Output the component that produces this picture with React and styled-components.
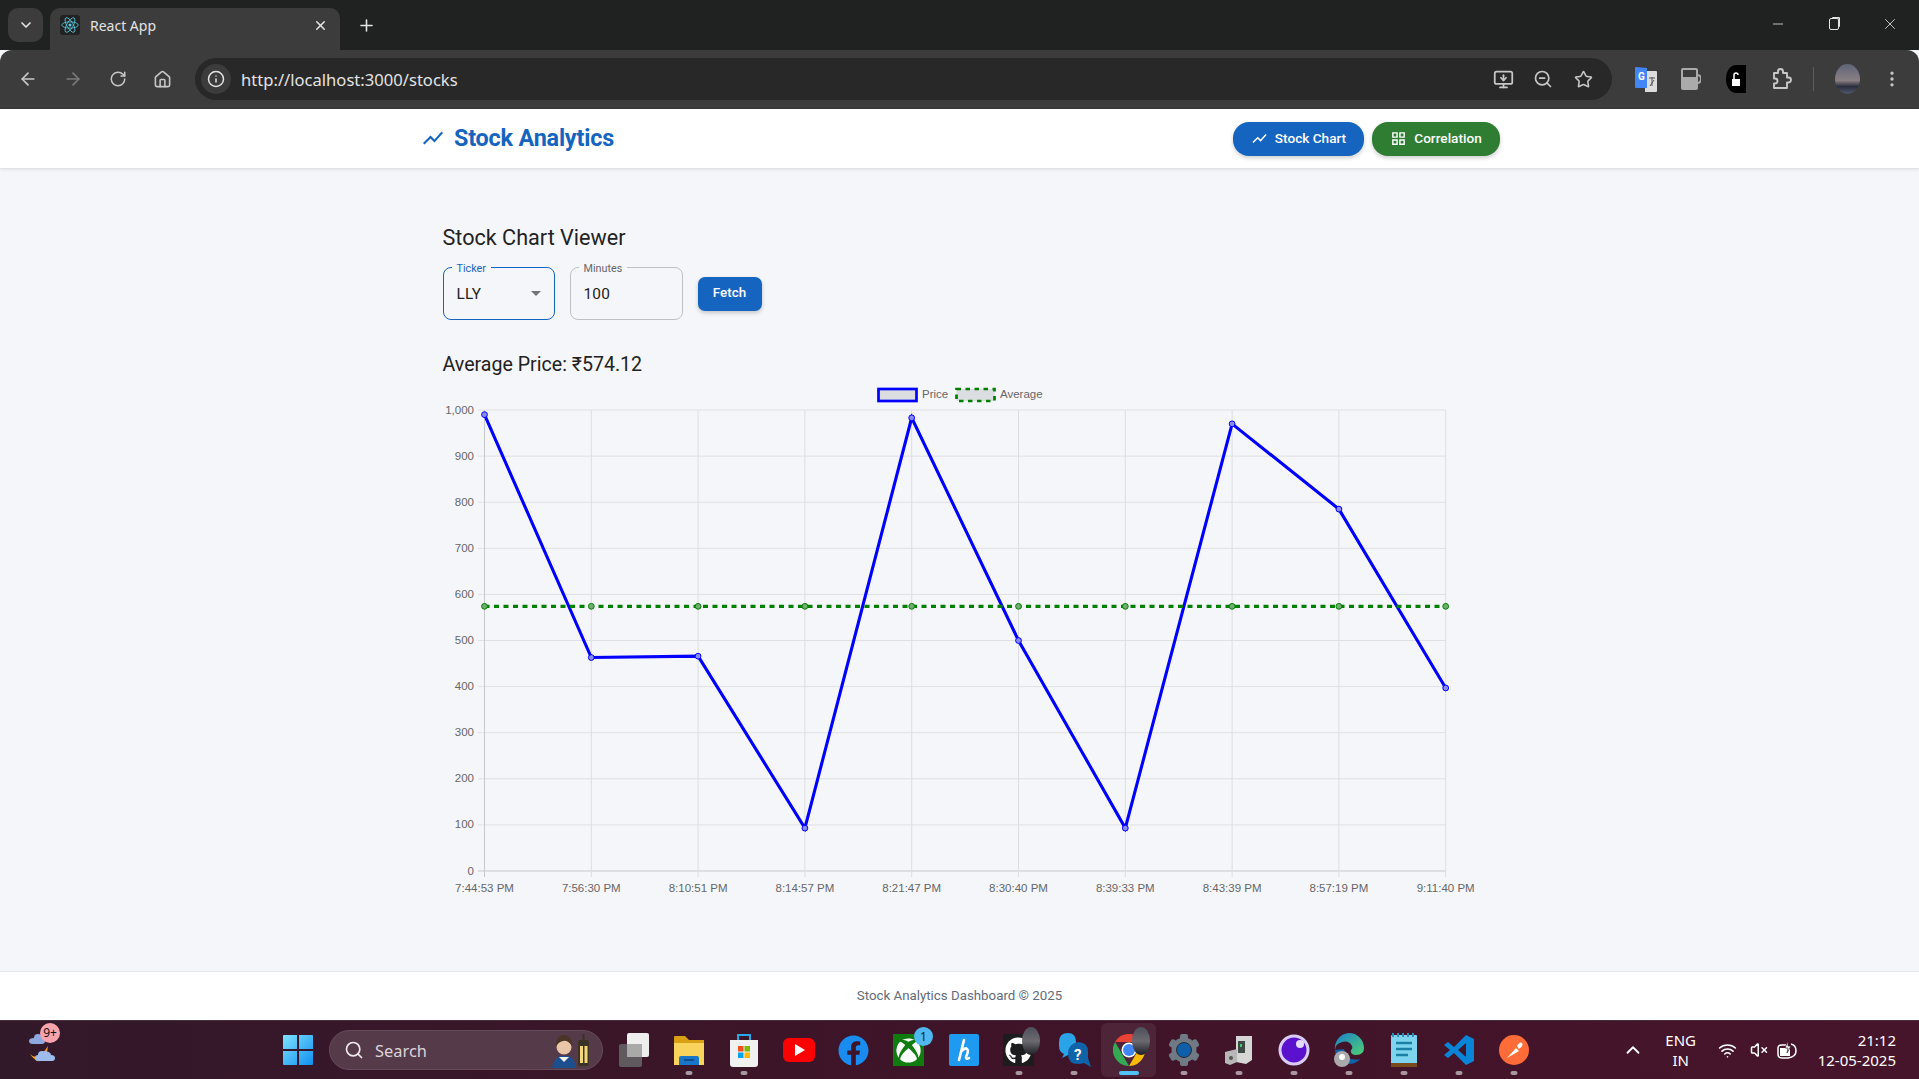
import React from 'react'
import styled, { createGlobalStyle } from 'styled-components'
import {
  ArrowLeft, ArrowRight, RotateCw, House, Info, ZoomOut, Star, EllipsisVertical,
  ChevronDown, ChevronUp, X, Plus, Minus, Search as SearchIcon, MonitorDown, Wifi, VolumeX
} from 'lucide-react'
import { FaGithub, FaXbox, FaFacebook } from 'react-icons/fa'

const GlobalStyle = createGlobalStyle`
  html, body { margin: 0; padding: 0; height: 100%; overflow: hidden; }
  body { font-family: Roboto, "Liberation Sans", sans-serif; background: #f5f6fa; }
  #root { height: 100%; }
  * { box-sizing: border-box; }
`

const Screen = styled.div`
  height: 1079px;
  display: flex;
  flex-direction: column;
`

/* browser chrome */
const TabStrip = styled.div`
  height: 50px;
  background: #202221;
  display: flex;
  align-items: flex-end;
  padding-left: 8px;
  color: #e3e3e3;
  flex: none;
`
const TabMenu = styled.div`
  width: 35px;
  height: 34px;
  margin-bottom: 8px;
  border-radius: 10px;
  background: #3c3c3c;
  display: flex;
  align-items: center;
  justify-content: center;
`
const Tab = styled.div`
  width: 290px;
  height: 42px;
  margin-left: 7px;
  padding: 0 12px 8px 10px;
  background: #3c3c3c;
  border-radius: 10px 10px 0 0;
  display: flex;
  align-items: center;
  font: 14px "Noto Sans", "Open Sans", sans-serif;
`
const Favicon = styled.div`
  width: 20px;
  height: 20px;
  background: #222;
  border-radius: 3px;
  margin-right: 10px;
  display: flex;
  align-items: center;
  justify-content: center;
`
const TabTitle = styled.span`
  flex: 1;
`
const NewTab = styled.div`
  margin: 0 0 9px 17px;
  height: 32px;
  display: flex;
  align-items: center;
`
const WindowControls = styled.div`
  margin-left: auto;
  align-self: flex-start;
  display: flex;
  padding-top: 14px;
  padding-right: 1px;
`
const WindowButton = styled.div`
  width: 56px;
  height: 20px;
  display: flex;
  align-items: center;
  justify-content: center;
`
const Restore = styled.div`
  width: 10px;
  height: 12px;
  border: 1.2px solid #e3e3e3;
  border-radius: 2px;
  box-shadow: 2px -2px 0 -1px #e3e3e3;
`
const Toolbar = styled.div`
  height: 59px;
  background: #3c3c3c;
  border-bottom: 1px solid #363636;
  border-radius: 12px 12px 0 0;
  display: flex;
  align-items: center;
  padding: 0 5px;
  color: #c7c7c7;
  flex: none;
`
const ToolSlot = styled.div`
  width: ${p => p.$w || 45}px;
  height: 36px;
  flex: none;
  display: flex;
  align-items: center;
  justify-content: center;
  color: ${p => p.$dim ? '#7a7a7a' : 'inherit'};
`
const AddressBar = styled.div`
  flex: 1;
  height: 42px;
  margin: 0 11px 0 10px;
  background: #282828;
  border-radius: 21px;
  display: flex;
  align-items: center;
  padding: 0 9px 0 6px;
`
const SiteInfo = styled.div`
  width: 30px;
  height: 30px;
  border-radius: 50%;
  background: #3c3c3c;
  color: #e3e3e3;
  display: flex;
  align-items: center;
  justify-content: center;
`
const Url = styled.span`
  flex: 1;
  margin-left: 10px;
  font: 16.6px "Noto Sans", "Open Sans", sans-serif;
  color: #e3e3e3;
`
const Divider = styled.div`
  width: 1px;
  height: 24px;
  margin: 0 10px;
  background: #5c5c5c;
  flex: none;
`
const Avatar = styled.div`
  width: 25px;
  height: 30px;
  margin: 0 9px 0 11px;
  border-radius: 50%;
  background: linear-gradient(#5d6478, #8a7f83 55%, #2a2e3d 75%, #545a6c);
  flex: none;
`

/* page */
const Page = styled.div`
  flex: 1;
  display: flex;
  flex-direction: column;
  background: #f5f6fa;
  min-height: 0;
`
const Header = styled.header`
  height: 60px;
  flex: none;
  background: #fff;
  border-bottom: 1px solid #e2e3e6;
  box-shadow: 0 1px 3px rgba(0, 0, 0, .08);
`
const HeaderInner = styled.div`
  width: 1079px;
  height: 100%;
  margin-left: 421px;
  display: flex;
  align-items: center;
  gap: 8px;
`
const Brand = styled.div`
  flex: 1;
  display: flex;
  align-items: center;
  gap: 9px;
  padding-bottom: 1px;
  color: #1565c0;
  font-size: 23.4px;
  font-weight: 700;
  letter-spacing: -.2px;
`
const NavButton = styled.div`
  height: 34px;
  width: ${p => p.$w}px;
  padding: 0 0 1px 0;
  border-radius: 16px;
  background: ${p => p.$bg};
  color: #fff;
  font-size: 13.6px;
  font-weight: 500;
  display: flex;
  align-items: center;
  justify-content: center;
  gap: 7px;
  box-shadow: 0 2px 4px rgba(0, 0, 0, .2);
`
const Main = styled.main`
  flex: 1;
  width: 1078px;
  margin: 0 auto;
  padding: 55px 22px 0;
`
const Title = styled.h1`
  margin: 0;
  font-size: 21.6px;
  line-height: 28px;
  font-weight: 400;
  color: #222;
`
const Controls = styled.div`
  display: flex;
  align-items: center;
  gap: 15px;
  margin-top: 15px;
`
const Field = styled.div`
  position: relative;
  width: ${p => p.$w}px;
  height: 53px;
  border: 1px solid ${p => p.$focus ? '#1565c0' : '#c0c1c4'};
  border-radius: 8px;
  padding: 0 12px 0 13px;
  display: flex;
  align-items: center;
  justify-content: space-between;
  font-size: 15.4px;
  letter-spacing: .2px;
  color: #222;
`
const FieldLabel = styled.span`
  position: absolute;
  top: -5px;
  left: 8px;
  padding: 0 5px;
  background: #f5f6fa;
  font-size: 10.8px;
  line-height: 12px;
  letter-spacing: 0;
  color: ${p => p.$focus ? '#1565c0' : '#666'};
`
const Caret = styled.div`
  width: 0;
  height: 0;
  margin-right: 1px;
  border-left: 5px solid transparent;
  border-right: 5px solid transparent;
  border-top: 5px solid #757575;
`
const FetchButton = styled.div`
  width: 64px;
  height: 34px;
  padding-bottom: 2px;
  border-radius: 7px;
  background: #1565c0;
  color: #fff;
  font-size: 13.4px;
  font-weight: 500;
  display: flex;
  align-items: center;
  justify-content: center;
  box-shadow: 0 2px 4px rgba(0, 0, 0, .2);
`
const Average = styled.div`
  margin-top: 33px;
  font-size: 19.6px;
  line-height: 24px;
  color: #222;
`
const ChartSvg = styled.svg`
  display: block;
  width: 1040px;
  height: 510px;
  margin-top: 6px;
  font-family: "Liberation Sans", Arial, sans-serif;
  font-size: 11.5px;
`
const Footer = styled.footer`
  height: 49px;
  flex: none;
  padding-bottom: 2px;
  background: #fff;
  border-top: 1px solid #e2e3e6;
  display: flex;
  align-items: center;
  justify-content: center;
  font-size: 13.3px;
  color: #5f6b7a;
`

/* taskbar */
const Taskbar = styled.div`
  height: 59px;
  flex: none;
  background: linear-gradient(90deg, #32192a, #3f1428 50%, #47152b);
  border-top: 1px solid #4a2c3f;
  display: flex;
  align-items: center;
  color: #fff;
  font-family: "Noto Sans", "Open Sans", sans-serif;
`
const Weather = styled.div`
  width: 270px;
  padding-left: 24px;
  flex: none;
  position: relative;
`
const WeatherBadge = styled.span`
  position: absolute;
  left: 40px;
  top: -7px;
  width: 20px;
  height: 20px;
  border-radius: 50%;
  background: #f9a3ad;
  color: #111;
  font-size: 12px;
  line-height: 20px;
  text-align: center;
`
const Cell = styled.div`
  position: relative;
  width: 55px;
  height: 54px;
  flex: none;
  display: flex;
  align-items: center;
  justify-content: center;
  border-radius: 6px;
  background: ${p => p.$active ? 'rgba(255,255,255,.07)' : 'transparent'};
  &::after {
    content: ${p => p.$dot ? '""' : 'none'};
    position: absolute;
    bottom: 2px;
    left: 50%;
    transform: translateX(-50%);
    width: ${p => p.$active ? 20 : 7}px;
    height: 4px;
    border-radius: 2px;
    background: ${p => p.$active ? '#4fc3f7' : '#a8979f'};
  }
`
const Tile = styled.div`
  width: 31px;
  height: 32px;
  background: ${p => p.$bg};
  display: flex;
  align-items: center;
  justify-content: center;
`
const CountBadge = styled.span`
  position: absolute;
  top: 4px;
  right: 3px;
  width: 19px;
  height: 19px;
  border-radius: 50%;
  background: #4fb8ee;
  color: #14222c;
  font-size: 12px;
  line-height: 19px;
  text-align: center;
`
const Ghost = styled.span`
  position: absolute;
  top: 4px;
  right: 6px;
  width: 18px;
  height: 28px;
  border-radius: 50%;
  background: linear-gradient(#4c4f5a, #6c6a70 50%, #1d1f26);
`
const SearchBox = styled.div`
  width: 274px;
  height: 40px;
  margin: 0 3px 0 4px;
  flex: none;
  position: relative;
  border-radius: 20px;
  background: #553a4a;
  border: 1px solid #664b5b;
  display: flex;
  align-items: center;
  padding-left: 14px;
  gap: 11px;
  font-size: 16.4px;
  color: #dcd3d8;
`
const Doodle = styled.svg`
  position: absolute;
  right: 10px;
  top: 3px;
`
const Tray = styled.div`
  margin-left: auto;
  display: flex;
  align-items: center;
  padding-right: 23px;
  font-size: 15px;
`
const TraySlot = styled.div`
  width: ${p => p.$w}px;
  display: flex;
  justify-content: center;
  text-align: center;
  line-height: 20px;
`
const Clock = styled.div`
  margin-left: 16px;
  text-align: right;
  line-height: 20px;
`

const ReactLogo = () => (
  <svg width="18" height="18" viewBox="-12 -12 24 24" fill="none" stroke="#5ccfe6" strokeWidth="1">
    <circle r="2" fill="#5ccfe6" stroke="none" />
    <ellipse rx="11" ry="4.2" />
    <ellipse rx="11" ry="4.2" transform="rotate(60)" />
    <ellipse rx="11" ry="4.2" transform="rotate(120)" />
  </svg>
)
const ShowChartIcon = ({ size }) => (
  <svg width={size} height={size} viewBox="0 0 24 24" fill="currentColor">
    <path d="M3.5 18.49l6-6.01 4 4L22 6.92l-1.41-1.41-7.09 7.97-4-4L2 16.99z" />
  </svg>
)
const GridViewIcon = ({ size }) => (
  <svg width={size} height={size} viewBox="0 0 24 24" fill="currentColor">
    <path d="M3 3v8h8V3H3zm6 6H5V5h4v4zm-6 4v8h8v-8H3zm6 6H5v-4h4v4zm4-16v8h8V3h-8zm6 6h-4V5h4v4zm-6 4v8h8v-8h-8zm6 6h-4v-4h4v4z" />
  </svg>
)
const ExtensionIcon = () => (
  <svg width="24" height="24" viewBox="0 0 24 24" fill="none" stroke="currentColor" strokeWidth="1.9" strokeLinejoin="round">
    <path d="M5 6h4V4.5a2.5 2.5 0 0 1 5 0V6h4v4.5h1.5a2.5 2.5 0 0 1 0 5H18V21H5v-4.500h1a2.500 2.500 0 0 0 0-5H5z" />
  </svg>
)
const TranslateIcon = () => (
  <svg width="22" height="26" viewBox="0 0 22 26">
    <path d="M10 5h11q1 0 1 1v19q0 1-1 1H10z" fill="#ddd" />
    <path d="M1 1l11 1v20H1q-1 0-1-1V2q0-1 1-1z" fill="#4285f4" />
    <text x="3" y="14" fontSize="10" fontWeight="700" fill="#fff" fontFamily="Roboto">G</text>
    <path d="M14 12h6M17 11v9M15 20l4-6" stroke="#555" fill="none" />
  </svg>
)
const TabSearchIcon = () => (
  <svg width="20" height="22" viewBox="0 0 20 22">
    <path d="M2 1h13q1 0 1 1v18q0 1-1 1H2q-1 0-1-1V2q0-1 1-1z" fill="none" stroke="#aaa" strokeWidth="2" />
    <path d="M2 9h13v11H2z" fill="#aaa" />
    <path d="M16 7q4 0 4 4t-4 4" fill="none" stroke="#aaa" strokeWidth="2" />
  </svg>
)
const LockIcon = () => (
  <svg width="20" height="28" viewBox="0 0 20 28">
    <path d="M20 0H10a10 14 0 0 0 0 28h10z" fill="#000" />
    <rect x="6" y="14" width="8" height="7" fill="#fff" />
    <path d="M8 14v-4q0-2 2-2t2 2" stroke="#fff" strokeWidth="1.5" fill="none" />
  </svg>
)
const WeatherIcon = () => (
  <svg width="32" height="36" viewBox="0 0 32 36">
    <path d="M14 4q-4 0-4 4-5 0-5 3t4 3h9q3 0 3-3t-3-3q0-4-4-4z" fill="#8ea9e0" />
    <path d="M6 24q8 8 18-8-1 10-6 14t-12-6z" fill="#f59a23" />
    <path d="M18 21q-4 0-4 4-3 0-3 3t3 3h14q3 0 3-3t-4-3q0-4-9-4z" fill="#9dbcec" />
  </svg>
)
const WindowsIcon = () => (
  <svg width="30" height="30" viewBox="0 0 30 30">
    <defs>
      <linearGradient id="winGrad" x1="0" y1="0" x2="1" y2="1">
        <stop offset="0" stopColor="#7fe3ff" />
        <stop offset="1" stopColor="#0f8fef" />
      </linearGradient>
    </defs>
    <path d="M0 1q0-1 1-1h13v14H0zM16 0h13q1 0 1 1v13H16zM0 16h14v14H1q-1 0-1-1zM16 16h14v13q0 1-1 1H16z" fill="url(#winGrad)" />
  </svg>
)
const DoodleArt = () => (
  <Doodle width="42" height="34" viewBox="0 0 42 34">
    <path d="M2 34q2-10 8-12h9q6 3 7 12z" fill="#1d4f8f" />
    <path d="M9 23l5 5 5-5z" fill="#f2f2f2" />
    <circle cx="14" cy="13" r="7.500" fill="#e9c6a8" />
    <path d="M6 13q0-12 8-12t8 11q-4-6-9-5t-7 6z" fill="#4a3425" />
    <path d="M33.500 0v6" stroke="#3a3226" strokeWidth="2" />
    <rect x="28" y="6" width="11" height="26" rx="2" fill="#3a3226" />
    <rect x="30" y="12" width="3" height="17" fill="#f5d77a" />
    <rect x="34.500" y="12" width="3" height="17" fill="#f5d77a" />
  </Doodle>
)
const TaskViewIcon = () => (
  <svg width="32" height="36" viewBox="0 0 32 36">
    <rect x="1" y="12" width="23" height="23" rx="2" fill="#5e5a5d" />
    <rect x="9" y="1" width="22" height="24" rx="2" fill="#eee" />
    <rect x="9" y="12" width="15" height="13" fill="#a9a9a9" />
  </svg>
)
const ExplorerIcon = () => (
  <svg width="32" height="32" viewBox="0 0 32 32">
    <path d="M1 3q0-1 1-1h10l4 4h15v4H1z" fill="#d9a015" />
    <path d="M1 9h30v22H1z" fill="#f9d45c" />
    <path d="M6 24q0-2 2-2h16q2 0 2 2v7H6z" fill="#1976c9" />
    <rect x="11" y="25" width="10" height="2" fill="#0d4f8f" />
  </svg>
)
const StoreIcon = () => (
  <svg width="30" height="34" viewBox="0 0 30 34">
    <path d="M9 7V2h12v5" fill="none" stroke="#29a8e8" strokeWidth="2" />
    <path d="M1 7h28v24q0 3-3 3H4q-3 0-3-3z" fill="#f1f1f1" />
    <rect x="9" y="13" width="5.5" height="5.5" fill="#f25022" />
    <rect x="15.500" y="13" width="5.5" height="5.5" fill="#7fba00" />
    <rect x="9" y="19.5" width="5.5" height="5.5" fill="#00a4ef" />
    <rect x="15.500" y="19.5" width="5.5" height="5.5" fill="#ffb900" />
  </svg>
)
const YoutubeIcon = () => (
  <svg width="32" height="24" viewBox="0 0 32 24">
    <rect width="32" height="24" rx="6" fill="#f00" />
    <path d="M12 6l10 6-10 6z" fill="#fff" />
  </svg>
)
const HiveIcon = () => (
  <svg width="30" height="32" viewBox="0 0 30 32">
    <rect width="30" height="32" rx="2" fill="#1e9bf0" />
    <path d="M15 6l-5 20M12 18q4-5 6-3t-1 8q0 3 3 1" stroke="#fff" strokeWidth="2.6" fill="none" strokeLinecap="round" />
  </svg>
)
const HelpIcon = () => (
  <svg width="34" height="36" viewBox="0 0 34 36">
    <path d="M11 1q8 0 8 9v6q0 7-8 7l-6 3 2-4q-5-2-5-8v-4q0-9 9-9z" fill="#2aa4e6" />
    <path d="M21 10q10 0 10 10v6l3 9-7-4q-3 1-6 1-10 0-10-10t10-12z" fill="#0f63a8" />
    <text x="17" y="28" fontSize="15" fontWeight="700" fill="#fff" fontFamily="Roboto">?</text>
  </svg>
)
const ChromeIcon = () => (
  <svg width="32" height="32" viewBox="-16 -16 32 32">
    <path d="M-13.9-8A16 16 0 0 1 13.9-8H0z" fill="#ea4335" />
    <path d="M13.9-8A16 16 0 0 1 0 16L7 4z" fill="#fbbc05" />
    <path d="M0 16A16 16 0 0 1-13.9-8L-7 4z" fill="#34a853" />
    <circle r="7.5" fill="#fff" />
    <circle r="6" fill="#4285f4" />
  </svg>
)
const SettingsIcon = () => (
  <svg width="32" height="32" viewBox="-16 -16 32 32">
    <g fill="#6f7a84">
      <circle r="12.5" />
      {[0, 60, 120, 180, 240, 300].map(a => <rect key={a} x="-4" y="-16" width="8" height="8" rx="2" transform={`rotate(${a})`} />)}
    </g>
    <circle r="7.5" fill="#0f5fa8" />
    <circle r="7.5" fill="none" stroke="#2b2b33" strokeWidth="1" />
  </svg>
)
const BucketIcon = () => (
  <svg width="30" height="32" viewBox="0 0 30 32">
    <path d="M12 2l16 0v24l-6 4-10-2z" fill="#d6d6d6" />
    <rect x="14" y="7" width="7" height="12" fill="#3f4a45" />
    <rect x="16" y="10" width="2" height="3" fill="#3fd06c" />
    <path d="M1 18l12-3v13l-7 3-5-2z" fill="#b7b7b7" />
    <circle cx="7" cy="24" r="2" fill="#555" />
  </svg>
)
const OrbIcon = () => (
  <svg width="32" height="32" viewBox="0 0 32 32">
    <circle cx="16" cy="16" r="14" fill="#5a12cf" stroke="#d9cdf7" strokeWidth="3" />
    <circle cx="22" cy="10" r="4" fill="#fff" opacity=".85" />
  </svg>
)
const EdgeIcon = () => (
  <svg width="32" height="36" viewBox="0 0 32 36">
    <defs>
      <linearGradient id="edgeGrad" x1="0" y1="0" x2="1" y2="1">
        <stop offset="0" stopColor="#1a7fd0" />
        <stop offset="1" stopColor="#4fd070" />
      </linearGradient>
    </defs>
    <path d="M16 1a15 15 0 0 1 15 15q0 7-8 7-6 0-5-5 2-1 1-4-3-6-10-4T2 18A15 15 0 0 1 16 1z" fill="url(#edgeGrad)" />
    <path d="M2 18q1 12 14 14 7 0 11-5-14 3-16-10z" fill="#0f62a8" />
    <circle cx="9" cy="27" r="8" fill="#aaa" />
    <circle cx="9" cy="25" r="3" fill="#fff" />
  </svg>
)
const NotepadIcon = () => (
  <svg width="26" height="34" viewBox="0 0 26 34">
    <rect y="2" width="26" height="32" rx="1" fill="#7ed4ee" />
    <path d="M0 30h26v4H0z" fill="#7a4a1f" />
    <path d="M2 0v4M7 0v4M12 0v4M17 0v4M22 0v4" stroke="#2c8fb5" strokeWidth="2" />
    <path d="M5 10h16M5 16h16M5 22h12" stroke="#1b7fa6" strokeWidth="2.5" />
  </svg>
)
const VsCodeIcon = () => (
  <svg width="32" height="32" viewBox="0 0 32 32">
    <path d="M23 1l8 4v22l-8 4-12-12-6 5-4-3 6-5-6-5 4-3 6 5zM23 9l-8 7 8 7z" fill="#0a84d6" fillRule="evenodd" />
  </svg>
)
const PostmanIcon = () => (
  <svg width="32" height="32" viewBox="0 0 32 32">
    <circle cx="16" cy="16" r="15" fill="#ff6c37" />
    <path d="M9 24l9-10 3 3zM19 12q3-5 5-3t-3 6z" fill="#fff" />
  </svg>
)
const BatteryIcon = () => (
  <svg width="20" height="20" viewBox="0 0 20 20">
    <path d="M14 4q5 1 5 7t-8 7H5q-4 0-4-4V8q0-3 4-3h4" fill="none" stroke="#fff" strokeWidth="1.5" />
    <path d="M3 8h10v8H3z" fill="#fff" />
    <path d="M11 1L8 8h3l-1 5 4-7h-3z" fill="#fff" stroke="#3f1428" strokeWidth=".7" />
  </svg>
)

const xs = i => 484.5 + i * 106.8
const ys = v => 871 - v * 0.461
const prices = [990, 463, 466, 93, 983, 500, 93, 970, 785, 397]
const times = ['7:44:53 PM', '7:56:30 PM', '8:10:51 PM', '8:14:57 PM', '8:21:47 PM', '8:30:40 PM', '8:39:33 PM', '8:43:39 PM', '8:57:19 PM', '9:11:40 PM']
const ticks = [0, 100, 200, 300, 400, 500, 600, 700, 800, 900, 1000]
const AVG = 574.12

const PriceChart = () => (
  <ChartSvg viewBox="443 383 1040 510">
    <rect x="878.5" y="389" width="38" height="12" fill="#dcdde1" stroke="#0000ff" strokeWidth="2.7" />
    <text x="922" y="398" fill="#666">Price</text>
    <rect x="956.5" y="389" width="38" height="12" fill="#dcdde1" stroke="#008000" strokeWidth="2.7" strokeDasharray="4.5 4.5" />
    <text x="1000" y="398" fill="#666">Average</text>

    {ticks.map(t => (
      <g key={t}>
        <line x1="478" x2={xs(9)} y1={ys(t)} y2={ys(t)} stroke={t === 0 ? '#c6c7ca' : '#dfe0e3'} />
        <text x="474" y={ys(t) + 3.5} textAnchor="end" fill="#666">{t === 1000 ? '1,000' : t}</text>
      </g>
    ))}
    {times.map((t, i) => (
      <g key={t}>
        <line x1={xs(i)} x2={xs(i)} y1="410" y2="877" stroke={i === 0 ? '#c6c7ca' : '#dcdde1'} />
        <text x={xs(i)} y="892" textAnchor="middle" fill="#666">{t}</text>
      </g>
    ))}

    <polyline points={prices.map((p, i) => `${xs(i)},${ys(p)}`).join(' ')} fill="none" stroke="#0000ff" strokeWidth="3.1" />
    <line x1={xs(0)} x2={xs(9)} y1={ys(AVG)} y2={ys(AVG)} stroke="#008000" strokeWidth="3.1" strokeDasharray="5 4.5" />
    {prices.map((p, i) => (
      <circle key={i} cx={xs(i)} cy={ys(p)} r="2.9" fill="#8a8af5" stroke="#0000ff" />
    ))}
    {prices.map((p, i) => (
      <circle key={i} cx={xs(i)} cy={ys(AVG)} r="2.9" fill="#6fae6f" stroke="#008000" />
    ))}
  </ChartSvg>
)

const BrowserChrome = () => (
  <>
    <TabStrip>
      <TabMenu><ChevronDown size={16} strokeWidth={2.5} /></TabMenu>
      <Tab>
        <Favicon><ReactLogo /></Favicon>
        <TabTitle>React App</TabTitle>
        <X size={15} strokeWidth={2.5} />
      </Tab>
      <NewTab><Plus size={19} strokeWidth={2} /></NewTab>
      <WindowControls>
        <WindowButton><Minus size={16} strokeWidth={1.2} /></WindowButton>
        <WindowButton><Restore /></WindowButton>
        <WindowButton><X size={18} strokeWidth={1.1} /></WindowButton>
      </WindowControls>
    </TabStrip>
    <Toolbar>
      <ToolSlot><ArrowLeft size={20} /></ToolSlot>
      <ToolSlot $dim><ArrowRight size={20} /></ToolSlot>
      <ToolSlot><RotateCw size={18} /></ToolSlot>
      <ToolSlot><House size={19} /></ToolSlot>
      <AddressBar>
        <SiteInfo><Info size={18} /></SiteInfo>
        <Url>http://localhost:3000/stocks</Url>
        <ToolSlot $w={40}><MonitorDown size={21} /></ToolSlot>
        <ToolSlot $w={40}><ZoomOut size={20} /></ToolSlot>
        <ToolSlot $w={40}><Star size={19} /></ToolSlot>
      </AddressBar>
      <ToolSlot><TranslateIcon /></ToolSlot>
      <ToolSlot><TabSearchIcon /></ToolSlot>
      <ToolSlot><LockIcon /></ToolSlot>
      <ToolSlot><ExtensionIcon /></ToolSlot>
      <Divider />
      <Avatar />
      <ToolSlot><EllipsisVertical size={20} /></ToolSlot>
    </Toolbar>
  </>
)

const WindowsTaskbar = () => (
  <Taskbar>
    <Weather><WeatherIcon /><WeatherBadge>9+</WeatherBadge></Weather>
    <Cell><WindowsIcon /></Cell>
    <SearchBox>
      <SearchIcon size={20} color="#f0eaed" />
      Search
      <DoodleArt />
    </SearchBox>
    <Cell><TaskViewIcon /></Cell>
    <Cell $dot><ExplorerIcon /></Cell>
    <Cell $dot><StoreIcon /></Cell>
    <Cell><YoutubeIcon /></Cell>
    <Cell><FaFacebook size={31} color="#1a8cf0" /></Cell>
    <Cell><Tile $bg="#107c10"><FaXbox size={25} color="#fff" /></Tile><CountBadge>1</CountBadge></Cell>
    <Cell><HiveIcon /></Cell>
    <Cell $dot><Tile $bg="#1c1c1e"><FaGithub size={27} color="#fff" /></Tile><Ghost /></Cell>
    <Cell $dot><HelpIcon /></Cell>
    <Cell $dot $active><ChromeIcon /><Ghost /></Cell>
    <Cell $dot><SettingsIcon /></Cell>
    <Cell $dot><BucketIcon /></Cell>
    <Cell $dot><OrbIcon /></Cell>
    <Cell $dot><EdgeIcon /></Cell>
    <Cell $dot><NotepadIcon /></Cell>
    <Cell $dot><VsCodeIcon /></Cell>
    <Cell $dot><PostmanIcon /></Cell>
    <Tray>
      <TraySlot $w={38}><ChevronUp size={22} /></TraySlot>
      <TraySlot $w={58}>ENG<br />IN</TraySlot>
      <TraySlot $w={36}><Wifi size={19} /></TraySlot>
      <TraySlot $w={26}><VolumeX size={18} /></TraySlot>
      <TraySlot $w={30}><BatteryIcon /></TraySlot>
      <Clock>21:12<br />12-05-2025</Clock>
    </Tray>
  </Taskbar>
)

export default function App() {
  return (
    <Screen>
      <GlobalStyle />
      <BrowserChrome />
      <Page>
        <Header>
          <HeaderInner>
            <Brand><ShowChartIcon size={24} />Stock Analytics</Brand>
            <NavButton $w={131} $bg="#1565c0"><ShowChartIcon size={17} />Stock Chart</NavButton>
            <NavButton $w={128} $bg="#2e7d32"><GridViewIcon size={17} />Correlation</NavButton>
          </HeaderInner>
        </Header>
        <Main>
          <Title>Stock Chart Viewer</Title>
          <Controls>
            <Field $w={112} $focus>
              <FieldLabel $focus>Ticker</FieldLabel>
              LLY
              <Caret />
            </Field>
            <Field $w={113}>
              <FieldLabel>Minutes</FieldLabel>
              100
            </Field>
            <FetchButton>Fetch</FetchButton>
          </Controls>
          <Average>Average Price: ₹574.12</Average>
          <PriceChart />
        </Main>
        <Footer>Stock Analytics Dashboard © 2025</Footer>
      </Page>
      <WindowsTaskbar />
    </Screen>
  )
}
